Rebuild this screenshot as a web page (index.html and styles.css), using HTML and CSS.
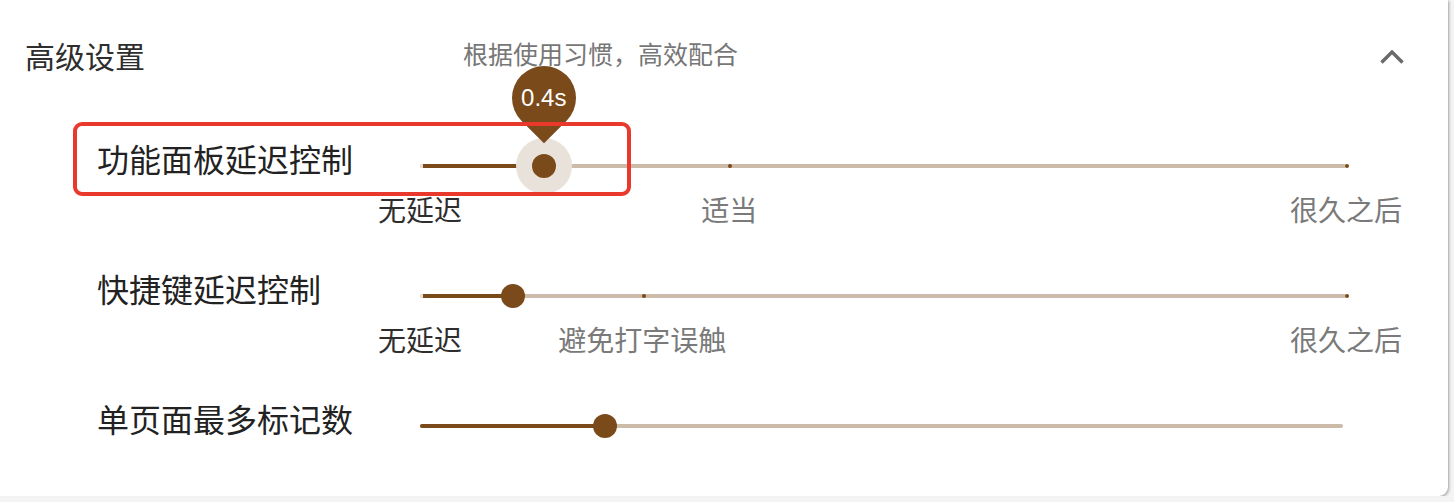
FILE: index.html
```html
<!DOCTYPE html>
<html lang="zh-CN">
<head>
<meta charset="utf-8">
<link rel="stylesheet" href="styles.css">
</head>
<body>
<div class="card">
  <div class="header">
    <div class="title">高级设置</div>
    <div class="subtitle">根据使用习惯，高效配合</div>
    <svg class="chevron" width="24" height="14" viewBox="0 0 24 14"><path d="M1.5 12.5 L12 2 L22.5 12.5" fill="none" stroke="#6a6a6a" stroke-width="3.4"/></svg>
  </div>

  <div class="row">
    <div class="row-label">功能面板延迟控制</div>
    <div class="slider">
      <div class="track"></div>
      <div class="track-active" style="width:13.4%"></div>
      <span class="mark mark-on" style="left:0%"></span>
      <span class="mark" style="left:33.4%"></span>
      <span class="mark" style="left:100%"></span>
      <span class="mark-label active" style="left:0%">无延迟</span>
      <span class="mark-label" style="left:33.4%">适当</span>
      <span class="mark-label" style="left:100%">很久之后</span>
      <span class="halo" style="left:13.4%"></span>
      <span class="thumb" style="left:13.4%"></span>
      <span class="value-label" style="left:13.4%"><span class="value-text">0.4s</span></span>
    </div>
  </div>

  <div class="row">
    <div class="row-label">快捷键延迟控制</div>
    <div class="slider">
      <div class="track"></div>
      <div class="track-active" style="width:10%"></div>
      <span class="mark mark-on" style="left:0%"></span>
      <span class="mark" style="left:24.1%"></span>
      <span class="mark" style="left:100%"></span>
      <span class="mark-label active" style="left:0%">无延迟</span>
      <span class="mark-label" style="left:24%">避免打字误触</span>
      <span class="mark-label" style="left:100%">很久之后</span>
      <span class="thumb" style="left:10%"></span>
    </div>
  </div>

  <div class="row">
    <div class="row-label">单页面最多标记数</div>
    <div class="slider short">
      <div class="track"></div>
      <div class="track-active" style="width:20%"></div>
      <span class="thumb" style="left:20%"></span>
    </div>
  </div>

  <div class="highlight"></div>
</div>
</body>
</html>
```

FILE: styles.css
```css
* { box-sizing: border-box; }

body {
  margin: 0;
  background: #f4f4f4;
  font-family: "Noto Sans CJK SC", "Noto Sans", sans-serif;
}

.card {
  position: relative;
  width: 1448px;
  height: 496px;
  background: #ffffff;
  border-radius: 0 0 9px 0;
  box-shadow: 1px 1px 3px rgba(0, 0, 0, 0.35);
}

.header {
  display: flex;
  align-items: center;
  height: 100px;
  padding: 14px 44px 0 25px;
}

.title {
  margin-bottom: 4px;
  font-size: 30px;
  line-height: 40px;
  color: #2e2e2e;
}

.subtitle {
  margin-left: 318px;
  margin-bottom: 8px;
  font-size: 25px;
  line-height: 30px;
  color: #777777;
}

.chevron {
  margin-left: auto;
}

.row {
  display: flex;
  align-items: flex-start;
  height: 130px;
  padding-left: 97px;
}

.row-label {
  width: 323px;
  padding-top: 39px;
  font-size: 32px;
  line-height: 38px;
  color: #222222;
}

.slider {
  position: relative;
  width: 926px;
  height: 4px;
  margin-top: 64px;
}

.slider.short {
  width: 923px;
}

.track {
  position: absolute;
  inset: 0;
  background: #cbbba8;
  border-radius: 2px;
}

.track-active {
  position: absolute;
  left: 0;
  top: 0;
  height: 4px;
  background: #7a4a1b;
  border-radius: 2px 0 0 2px;
}

.mark {
  position: absolute;
  top: 0;
  width: 4px;
  height: 4px;
  margin-left: -1px;
  border-radius: 50%;
  background: #7a4a1b;
}

.mark-on {
  background: #e6ddd3;
  border-radius: 0;
  width: 3px;
  margin-left: 0;
}

.mark-label {
  position: absolute;
  top: 28px;
  transform: translateX(-50%);
  white-space: nowrap;
  font-size: 28px;
  line-height: 34px;
  color: #7a7a7a;
}

.mark-label.active {
  color: #2e2e2e;
}

.halo {
  position: absolute;
  top: -26px;
  width: 56px;
  height: 56px;
  margin-left: -28px;
  border-radius: 50%;
  background: #e9e2db;
}

.thumb {
  position: absolute;
  top: -10px;
  width: 24px;
  height: 24px;
  margin-left: -12px;
  border-radius: 50%;
  background: #7a4a1b;
}

.value-label {
  position: absolute;
  top: -98px;
  width: 64px;
  height: 64px;
  margin-left: -32px;
  background: #7a4a1b;
  border-radius: 50% 50% 50% 0;
  transform: rotate(-45deg);
  display: flex;
  align-items: center;
  justify-content: center;
}

.value-text {
  transform: rotate(45deg);
  font-family: "Liberation Sans", Arial, sans-serif;
  font-size: 24px;
  line-height: 28px;
  color: #ffffff;
}

.highlight {
  position: absolute;
  left: 73px;
  top: 122px;
  width: 558px;
  height: 74px;
  border: 4px solid #e8392c;
  border-radius: 9px;
}
```
